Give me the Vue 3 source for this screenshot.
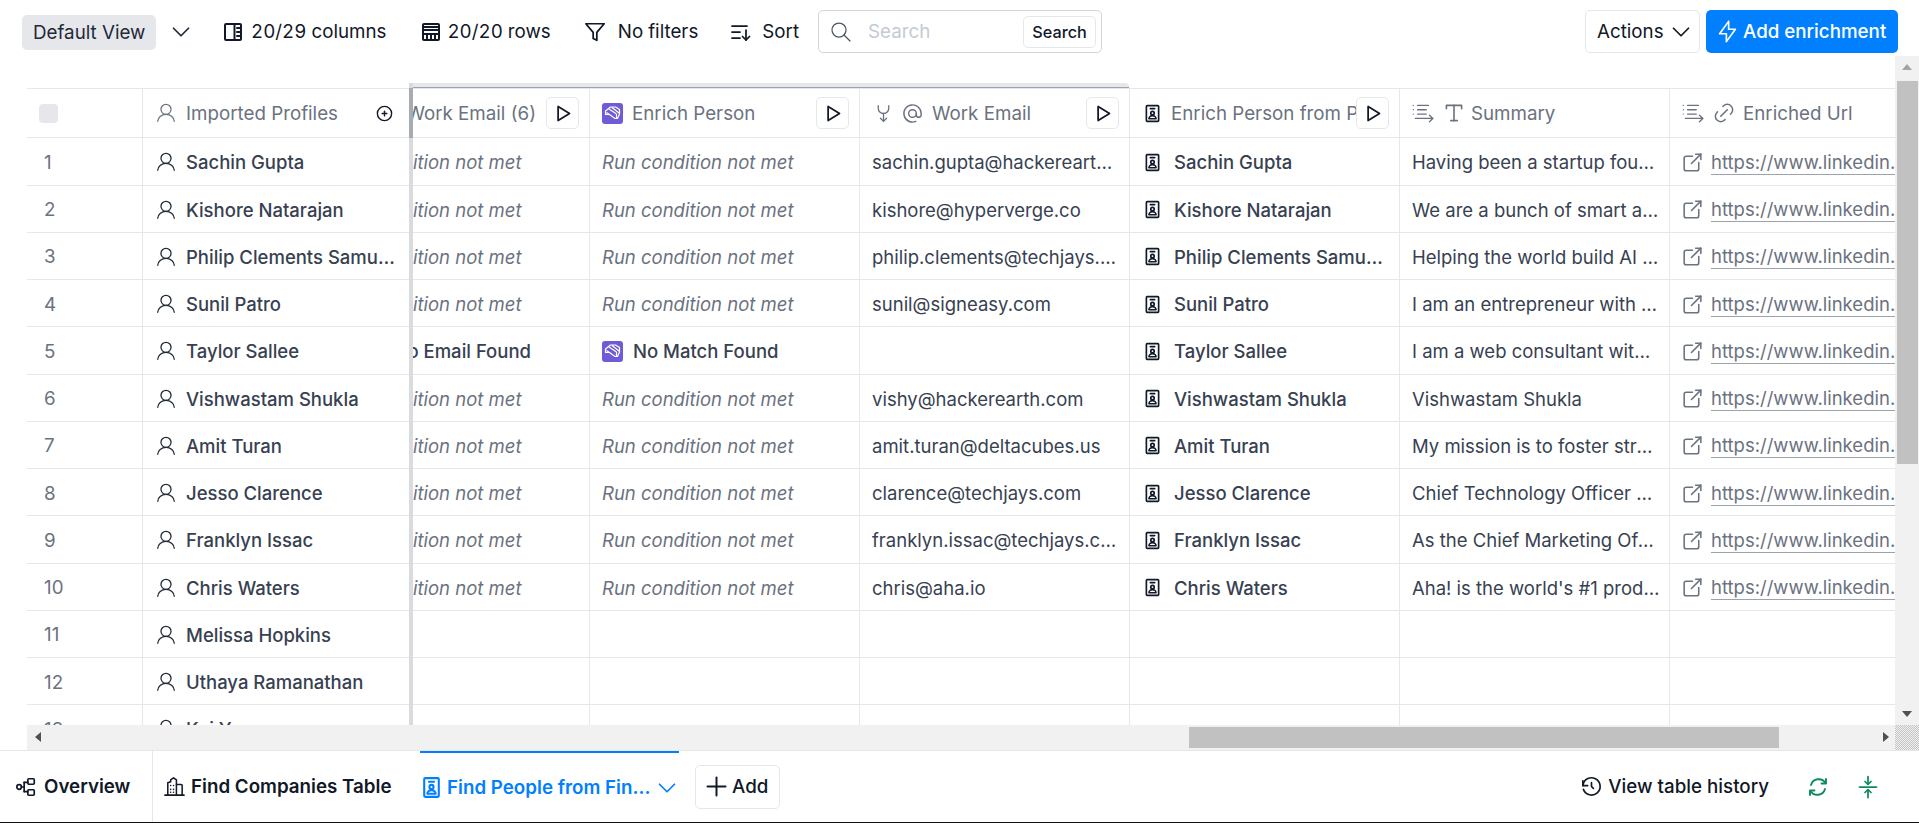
<script setup>
import { h } from 'vue';

const paths = {
  user: ['M6.500 8a5.500 5.500 0 1 0 11 0a5.500 5.500 0 1 0 -11 0', 'M3 21c0 -4 4 -7.500 9 -7.500s9 3.500 9 7.500'],
  chevron: ['M6 9l6 6l6 -6'],
  columns: ['M5 4h14a1 1 0 0 1 1 1v14a1 1 0 0 1 -1 1h-14a1 1 0 0 1 -1 -1v-14a1 1 0 0 1 1 -1z', 'M13.500 4v16', 'M16 8h4', 'M16 12h4', 'M16 16h4'],
  rows: ['M5 4h14a1 1 0 0 1 1 1v14a1 1 0 0 1 -1 1h-14a1 1 0 0 1 -1 -1v-14a1 1 0 0 1 1 -1z', 'M4 7h16', 'M4 10h16', 'M4 14h16', 'M8 14v6', 'M12 14v6', 'M16 14v6'],
  filter: ['M22 3H2l8 9.460V19l4 2v-8.540L22 3z'],
  sort: ['M3 6h15', 'M3 12h8', 'M3 18h8', 'M17 10v10', 'M13.500 16.500l3.500 3.500l3.500 -3.500'],
  search: ['M10 10m-7 0a7 7 0 1 0 14 0a7 7 0 1 0 -14 0', 'M21 21l-6 -6'],
  bolt: ['M13 3v7h6l-8 11v-7h-6l8 -11'],
  play: ['M7 4v16l13 -8z'],
  plusCircle: ['M12 12m-9 0a9 9 0 1 0 18 0a9 9 0 1 0 -18 0', 'M9 12h6', 'M12 9v6'],
  fork: ['M6 3v3a6 6 0 0 0 6 6a6 6 0 0 0 6 -6v-3', 'M12 12v9', 'M8.500 17.500l3.500 3.500l3.500 -3.500'],
  at: ['M12 12m-4 0a4 4 0 1 0 8 0a4 4 0 1 0 -8 0', 'M16 12v1.500a2.500 2.500 0 0 0 5 0v-1.500a9 9 0 1 0 -5.500 8.280'],
  badge: ['M6 3h12a1 1 0 0 1 1 1v16a1 1 0 0 1 -1 1h-12a1 1 0 0 1 -1 -1v-16a1 1 0 0 1 1 -1z', 'M9.500 6.500h5', 'M12 11.500m-2 0a2 2 0 1 0 4 0a2 2 0 1 0 -4 0', 'M8 18a4 3.500 0 0 1 8 0z'],
  list: ['M3 5h.010', 'M3 9h.010', 'M3 13h.010', 'M7 5h10', 'M7 9h8', 'M7 13h8', 'M5 17h16', 'M18 14l3 3l-3 3'],
  text: ['M5 8v-3h14v3', 'M12 5v14', 'M9 19h6'],
  link: ['M9 15l6 -6', 'M11 6l.463 -.536a5 5 0 0 1 7.071 7.072l-.534 .464', 'M13 18l-.397 .534a5.068 5.068 0 0 1 -7.127 0a4.972 4.972 0 0 1 0 -7.071l.524 -.463'],
  external: ['M12 6h-6a2 2 0 0 0 -2 2v10a2 2 0 0 0 2 2h10a2 2 0 0 0 2 -2v-6', 'M11 13l9 -9', 'M15 4h5v5'],
  overview: ['M2 12a2.500 2.500 0 1 0 5 0a2.500 2.500 0 1 0 -5 0', 'M7 12h3', 'M10 7v10', 'M10 7h4', 'M10 17h4', 'M15 3h5a1 1 0 0 1 1 1v4a1 1 0 0 1 -1 1h-5a1 1 0 0 1 -1 -1v-4a1 1 0 0 1 1 -1z', 'M15 15h5a1 1 0 0 1 1 1v4a1 1 0 0 1 -1 1h-5a1 1 0 0 1 -1 -1v-4a1 1 0 0 1 1 -1z'],
  building: ['M2 21h20', 'M5 21v-13l3 -1v-2l3 -2l3 2v16', 'M14 10h5a1 1 0 0 1 1 1v10', 'M8 11h.010', 'M11 11h.010', 'M8 15h.010', 'M11 15h.010', 'M8 18h.010', 'M11 18h.010'],
  plus: ['M12 4v16', 'M4 12h16'],
  history: ['M12 8v4l2 2', 'M3.050 11a9 9 0 1 1 .5 4', 'M3 6v5h5'],
  refresh: ['M5 10a8 8 0 0 1 14.500 -2', 'M20 4v4.500h-4.500', 'M19 14a8 8 0 0 1 -14.500 2', 'M4 20v-4.500h4.500'],
  compress: ['M3.500 12h17', 'M12 1.500v7.500', 'M9 6.500l3 3l3 -3', 'M12 22.500v-7.500', 'M9 17.500l3 -3l3 3'],
};

// small wrapper so the template stays readable
const Icon = (props) =>
  h(
    'svg',
    {
      width: props.size || 24,
      height: props.size || 24,
      viewBox: '0 0 24 24',
      fill: 'none',
      stroke: 'currentColor',
      'stroke-width': props.sw || 1.75,
      'stroke-linecap': 'round',
      'stroke-linejoin': 'round',
      class: 'icon',
    },
    paths[props.name].map((d) => h('path', { d }))
  );
Icon.props = ['name', 'size', 'sw'];

const Brain = (props) =>
  h('svg', { width: 21, height: 21, viewBox: '0 0 21 21', class: ['icon', props.cls] }, [
    h('rect', { width: 21, height: 21, rx: 3, fill: '#6f5bd6' }),
    h('path', {
      d: 'M3.500 8l5 -4h5l4 2.500v4.500l-2 4.500h-2.500l-5.500 -4h-4z M7 6l7.500 5 M4.500 9.500l6.500 4.500 M10 4.500l7 5.500 M14.500 11v4.500',
      fill: 'none',
      stroke: '#fff',
      'stroke-width': 1.2,
      'stroke-linejoin': 'round',
    }),
  ]);
Brain.props = ['cls'];

const people = [
  { name: 'Sachin Gupta', email: 'sachin.gupta@hackerearth.com', summary: 'Having been a startup founder and product leader', url: 1 },
  { name: 'Kishore Natarajan', email: 'kishore@hyperverge.co', summary: 'We are a bunch of smart and curious people', url: 1 },
  { name: 'Philip Clements Samuel Raj', email: 'philip.clements@techjays.com', summary: 'Helping the world build AI products that matter', url: 1 },
  { name: 'Sunil Patro', email: 'sunil@signeasy.com', summary: 'I am an entrepreneur with a passion for building', url: 1 },
  { name: 'Taylor Sallee', email: '', summary: 'I am a web consultant with over ten years of work', url: 1, missing: true },
  { name: 'Vishwastam Shukla', email: 'vishy@hackerearth.com', summary: 'Vishwastam Shukla', url: 1 },
  { name: 'Amit Turan', email: 'amit.turan@deltacubes.us', summary: 'My mission is to foster strong teams and products', url: 1 },
  { name: 'Jesso Clarence', email: 'clarence@techjays.com', summary: 'Chief Technology Officer at Techjays since 2020', url: 1 },
  { name: 'Franklyn Issac', email: 'franklyn.issac@techjays.com', summary: 'As the Chief Marketing Officer at Techjays I lead', url: 1 },
  { name: 'Chris Waters', email: 'chris@aha.io', summary: "Aha! is the world's #1 product development software", url: 1 },
  { name: 'Melissa Hopkins' },
  { name: 'Uthaya Ramanathan' },
  { name: 'Kai Yu' },
];
</script>

<template>
  <div class="page">
    <header class="toolbar">
      <div class="view-chip">Default View</div>
      <Icon name="chevron" class="view-caret" :size="30" :sw="1.4" />
      <div class="tool t-columns"><Icon name="columns" :sw="2" /><span>20/29 columns</span></div>
      <div class="tool t-rows"><Icon name="rows" :sw="2" /><span>20/20 rows</span></div>
      <div class="tool t-filter"><Icon name="filter" :size="22" :sw="1.9" /><span>No filters</span></div>
      <div class="tool t-sort"><Icon name="sort" :sw="1.75" /><span>Sort</span></div>
      <div class="search">
        <Icon name="search" class="search-icon" :sw="1.25" />
        <span class="placeholder">Search</span>
        <button class="search-btn">Search</button>
      </div>
      <button class="actions">Actions <Icon name="chevron" :size="30" :sw="1.4" /></button>
      <button class="add-enrichment"><Icon name="bolt" :size="27" :sw="1.5" />Add enrichment</button>
    </header>

    <main class="main">
      <div class="grid">
        <div class="frozen">
          <div class="row head">
            <div class="c-index"><span class="checkbox"></span></div>
            <div class="c-name">
              <Icon name="user" class="head-user" :size="22" :sw="1.4" />
              <span class="head-text">Imported Profiles</span>
              <Icon name="plusCircle" class="add-col" :size="19" :sw="1.75" />
            </div>
          </div>
          <div v-for="(p, i) in people" :key="p.name" class="row">
            <div class="c-index index-num">{{ i + 1 }}</div>
            <div class="c-name">
              <Icon name="user" class="name-icon" :size="22" :sw="1.4" />
              <span class="name">{{ p.name }}</span>
            </div>
          </div>
        </div>

        <div class="scroller">
          <div class="group-bar"></div>
          <div class="cols">
            <div class="row head">
              <div class="cell h-first">
                <span class="head-text">Work Email (6)</span>
                <button class="play"><Icon name="play" :size="21" :sw="2" /></button>
              </div>
              <div class="cell">
                <Brain cls="brain" />
                <span class="head-text grow">Enrich Person</span>
                <button class="play"><Icon name="play" :size="21" :sw="2" /></button>
              </div>
              <div class="cell">
                <Icon name="fork" class="h-fork" :size="21" :sw="1.5" />
                <Icon name="at" class="h-at" :size="23" :sw="1.5" />
                <span class="head-text grow">Work Email</span>
                <button class="play"><Icon name="play" :size="21" :sw="2" /></button>
              </div>
              <div class="cell">
                <Icon name="badge" class="badge h-badge" :size="21" :sw="1.9" />
                <span class="head-text grow">Enrich Person from Profile</span>
                <button class="play"><Icon name="play" :size="21" :sw="2" /></button>
              </div>
              <div class="cell wide-icons">
                <Icon name="list" class="h-list" :size="26" :sw="1.25" />
                <Icon name="text" class="h-text" :size="26" :sw="1.5" />
                <span class="head-text grow">Summary</span>
              </div>
              <div class="cell wide-icons">
                <Icon name="list" class="h-list" :size="26" :sw="1.25" />
                <Icon name="link" class="h-link" :size="26" :sw="1.4" />
                <span class="head-text grow">Enriched Url</span>
              </div>
            </div>

            <div v-for="p in people" :key="p.name" class="row">
              <template v-if="p.missing">
                <div class="cell no-email"><span class="val medium">No Email Found</span></div>
                <div class="cell"><Brain cls="brain body-brain" /><span class="val medium">No Match Found</span></div>
              </template>
              <template v-else-if="p.url">
                <div class="cell muted first-muted">Run condition not met</div>
                <div class="cell muted">Run condition not met</div>
              </template>
              <template v-else>
                <div class="cell"></div>
                <div class="cell"></div>
              </template>
              <div class="cell"><span class="val">{{ p.email }}</span></div>
              <div class="cell">
                <template v-if="p.url">
                  <Icon name="badge" class="badge" :size="21" :sw="1.9" />
                  <span class="val name">{{ p.name }}</span>
                </template>
              </div>
              <div class="cell summary"><span class="val">{{ p.summary }}</span></div>
              <div class="cell wide-icons">
                <template v-if="p.url">
                  <Icon name="external" class="ext" :size="25" :sw="1.5" />
                  <span class="url">https://www.linkedin.com/in/profile</span>
                </template>
              </div>
            </div>
          </div>
        </div>
      </div>

      <div class="vscroll">
        <span class="arrow up"></span>
        <div class="vthumb"></div>
        <span class="arrow down"></span>
      </div>
    </main>

    <div class="hscroll">
      <span class="arrow left"></span>
      <div class="hthumb"></div>
      <span class="arrow right"></span>
      <div class="corner"></div>
    </div>

    <footer class="tabs">
      <div class="tab overview"><Icon name="overview" :size="22" :sw="1.85" /><span>Overview</span></div>
      <div class="tab companies"><Icon name="building" :size="23" :sw="1.6" /><span>Find Companies Table</span></div>
      <div class="tab active">
        <Icon name="badge" class="active-badge" :size="25" :sw="2" />
        <span class="active-text">Find People from Fin...</span>
        <Icon name="chevron" :size="30" :sw="1.4" />
      </div>
      <button class="add-tab"><Icon name="plus" :size="27" :sw="1.75" />Add</button>
      <div class="history"><Icon name="history" :size="23" :sw="1.75" />View table history</div>
      <Icon name="refresh" class="green refresh" :size="24" :sw="1.9" />
      <Icon name="compress" class="green compress" :sw="1.75" />
    </footer>
  </div>
</template>

<style scoped>
.page {
  width: 1919px;
  height: 823px;
  display: flex;
  flex-direction: column;
  overflow: hidden;
  background: #fff;
  color: #111827;
  font-family: Inter, "Liberation Sans", sans-serif;
  font-size: 18.75px;
}

button {
  font-family: inherit;
  cursor: pointer;
}

.icon {
  flex: none;
  display: block;
}

/* top toolbar */
.toolbar {
  height: 56px;
  flex: none;
  box-sizing: border-box;
  padding: 10px 21px 3px 22px;
  display: flex;
  align-items: center;
}

.view-chip {
  width: 134px;
  box-sizing: border-box;
  height: 35px;
  margin-top: 2px;
  padding: 0 11px;
  display: flex;
  align-items: center;
  background: #e5e7eb;
  border-radius: 5px;
  color: #1f2937;
  white-space: nowrap;
}

.view-caret {
  margin-left: 10px;
  color: #1f2937;
}

.tool {
  display: flex;
  align-items: center;
  gap: 6px;
  white-space: nowrap;
  font-variant-numeric: tabular-nums;
}

.t-columns {
  margin-left: 25px;
}

.t-rows {
  gap: 4px;
  margin-left: 33px;
}

.t-filter {
  gap: 12px;
  margin-left: 33px;
}

.t-sort {
  gap: 9px;
  margin-left: 31px;
}

.search {
  width: 284px;
  height: 43px;
  box-sizing: border-box;
  margin-left: 19px;
  border: 1px solid #d1d5db;
  border-radius: 5px;
  display: flex;
  align-items: center;
  padding: 0 5px 0 10px;
}

.search-icon {
  color: #4b5563;
}

.placeholder {
  margin-left: 15px;
  color: #c4cad3;
}

.search-btn {
  margin-left: auto;
  width: 73px;
  height: 32px;
  padding: 0;
  background: #fff;
  border: 1px solid #e5e7eb;
  border-radius: 5px;
  color: #111827;
  font-size: 16.25px;
  font-weight: 500;
}

.actions {
  margin-left: auto;
  width: 115px;
  height: 43px;
  display: flex;
  align-items: center;
  gap: 2px;
  padding: 0 0 0 11px;
  background: #fff;
  border: 1px solid #e5e7eb;
  border-radius: 5px;
  color: #111827;
  font-size: 18.75px;
}

.add-enrichment {
  margin-left: 6px;
  width: 192px;
  height: 43px;
  display: flex;
  align-items: center;
  gap: 2px;
  padding: 0 0 0 8px;
  border: none;
  border-radius: 5px;
  background: #0080ff;
  color: #fff;
  font-size: 18.75px;
  font-weight: 500;
  white-space: nowrap;
}

/* table */
.main {
  flex: 1;
  min-height: 0;
  display: flex;
}

.grid {
  flex: 1;
  min-width: 0;
  margin-left: 27px;
  padding-top: 27px;
  display: flex;
  overflow: hidden;
}

.frozen {
  width: 386px;
  flex: none;
  padding-top: 5px;
  border-right: 4px solid #d9dbe1;
  box-sizing: border-box;
  position: relative;
}

.frozen::after {
  content: "";
  position: absolute;
  top: 5px;
  right: -4px;
  width: 4px;
  height: 50px;
  background: #a7abb3;
}

.scroller {
  flex: 1;
  min-width: 0;
  overflow: hidden;
}

.group-bar {
  width: 716px;
  height: 5px;
  box-sizing: border-box;
  background: #e5e7eb;
  border-bottom: 1px solid #9ca3af;
  border-top-right-radius: 4px;
}

.cols {
  margin-left: -93px;
}

.row {
  display: flex;
  height: 47.25px;
  box-sizing: border-box;
  border-bottom: 1px solid #e5e7eb;
}

.row.head {
  height: 50.3px;
  border-top: 1px solid #e5e7eb;
}

.scroller .row {
  width: 1620px;
}

.row:not(.head) > div {
  padding-top: 2px;
}

.c-index {
  width: 116px;
  flex: none;
  box-sizing: border-box;
  border-right: 1px solid #e5e7eb;
  padding-left: 12px;
  display: flex;
  align-items: center;
}

.index-num {
  padding-left: 17px;
  color: #6b7280;
}

.checkbox {
  width: 19px;
  height: 19px;
  border-radius: 4px;
  background: #e5e7eb;
}

.c-name {
  flex: 1;
  min-width: 0;
  padding: 0 8px 0 10px;
  display: flex;
  align-items: center;
}

.head-user {
  color: #6b7280;
  margin: 0 9px 0 2px;
}

.head-text {
  color: #6b7280;
  white-space: nowrap;
  overflow: hidden;
}

.head-text.grow {
  flex: 1;
  min-width: 0;
}

.add-col {
  margin-left: auto;
  margin-right: 7px;
  color: #111827;
}

.name-icon {
  color: #1f2937;
  margin: 0 9px 0 2px;
}

.name {
  color: #374151;
  font-size: 18.5px;
  font-weight: 500;
  white-space: nowrap;
  overflow: hidden;
  text-overflow: ellipsis;
}

.cell {
  width: 270px;
  flex: none;
  box-sizing: border-box;
  border-right: 1px solid #e5e7eb;
  padding: 0 12px;
  display: flex;
  align-items: center;
  overflow: hidden;
  color: #374151;
  font-size: 18.5px;
}

.head .cell {
  padding-right: 10px;
  font-size: 18.75px;
}

.wide-icons {
  padding-left: 10px;
}

.summary {
  padding-right: 9px;
}

.h-first {
  justify-content: flex-end;
}

.h-first .head-text {
  margin-right: 10px;
}

.brain {
  margin-right: 9px;
}

.body-brain {
  margin-right: 10px;
}

.h-fork {
  color: #6b7280;
  margin-left: 1px;
}

.h-at {
  color: #6b7280;
  margin: 0 8px 0 7px;
}

.h-list {
  color: #6b7280;
}

.h-text {
  color: #6b7280;
  margin: 0 4px 0 5px;
}

.h-link {
  color: #6b7280;
  margin: 0 6px 0 5px;
}

.no-email {
  justify-content: flex-end;
  padding-right: 58px;
}

.muted {
  font-style: italic;
  color: #6b7280;
}

.first-muted {
  padding-left: 10px;
}

.val {
  min-width: 0;
  white-space: nowrap;
  overflow: hidden;
  text-overflow: ellipsis;
}

.medium {
  font-weight: 500;
}

.badge {
  margin: 0 11px 0 0;
  color: #111827;
}

.h-badge {
  margin-right: 8px;
}

.ext {
  color: #6b7280;
  margin-right: 6px;
}

.url {
  color: #6b7280;
  white-space: nowrap;
  border-bottom: 1px solid #9ca3af;
  line-height: 24px;
}

.play {
  flex: none;
  width: 33px;
  height: 32px;
  padding: 0;
  display: flex;
  align-items: center;
  justify-content: center;
  background: #fff;
  border: 1px solid #e5e7eb;
  border-radius: 5px;
  color: #111827;
}

/* scrollbars */
.vscroll {
  width: 24px;
  flex: none;
  background: #f1f1f1;
  display: flex;
  flex-direction: column;
  align-items: center;
  position: relative;
}

.vthumb {
  width: 21px;
  height: 383px;
  margin-top: 25px;
  margin-left: 1px;
  background: #c1c1c1;
}

.arrow {
  position: absolute;
  width: 0;
  height: 0;
  border: 5px solid transparent;
}

.arrow.up {
  top: 8px;
  border-top: 0;
  border-bottom: 6px solid #a3a3a3;
}

.arrow.down {
  bottom: 8px;
  border-bottom: 0;
  border-top: 6px solid #505050;
}

.hscroll {
  height: 26px;
  flex: none;
  box-sizing: border-box;
  padding-left: 27px;
  border-bottom: 1px solid #e5e7eb;
  display: flex;
  position: relative;
}

.hscroll::before {
  content: "";
  position: absolute;
  left: 27px;
  right: 0;
  top: 0;
  bottom: 0;
  background: #f1f1f1;
}

.hthumb {
  width: 590px;
  height: 21px;
  margin: 2px 0 0 1162px;
  background: #c1c1c1;
  position: relative;
}

.arrow.left {
  left: 35px;
  top: 7px;
  border-left: 0;
  border-right: 6px solid #505050;
}

.arrow.right {
  right: 30px;
  top: 7px;
  border-right: 0;
  border-left: 6px solid #505050;
}

.corner {
  position: absolute;
  top: 0;
  right: 0;
  width: 24px;
  height: 25px;
  background: repeating-conic-gradient(#c4c4c4 0 25%, #f1f1f1 0 50%) 0 0 / 2px 2px;
}

/* bottom tabs */
.tabs {
  height: 72px;
  flex: none;
  box-sizing: border-box;
  border-bottom: 1px solid #111;
  display: flex;
  align-items: stretch;
  font-weight: 600;
}

.tab {
  display: flex;
  align-items: center;
  white-space: nowrap;
}

.overview {
  width: 153px;
  box-sizing: border-box;
  padding-left: 15px;
  gap: 7px;
  border-right: 1px solid #e5e7eb;
}

.companies {
  width: 267px;
  box-sizing: border-box;
  padding-left: 10px;
  gap: 5px;
}

.active {
  width: 259px;
  flex: none;
  box-sizing: border-box;
  border-top: 2px solid #0080ff;
  color: #0080ff;
}

.active-badge {
  margin-left: -1px;
}

.active-text {
  margin: 0 2px 0 3px;
}

.add-tab {
  align-self: center;
  margin-left: 16px;
  width: 85px;
  height: 44px;
  padding: 0 0 0 7px;
  display: flex;
  align-items: center;
  gap: 2px;
  background: #fff;
  border: 1px solid #e5e7eb;
  border-radius: 5px;
  color: #111827;
  font-size: 18.75px;
  font-weight: 500;
}

.history {
  margin-left: auto;
  display: flex;
  align-items: center;
  gap: 5px;
  font-weight: 500;
  white-space: nowrap;
}

.green {
  align-self: center;
  color: #0e8a5f;
}

.refresh {
  margin-left: 37px;
}

.compress {
  margin: 0 39px 0 26px;
}
</style>

<style>
html,
body {
  margin: 0;
  overflow: hidden;
}
</style>
